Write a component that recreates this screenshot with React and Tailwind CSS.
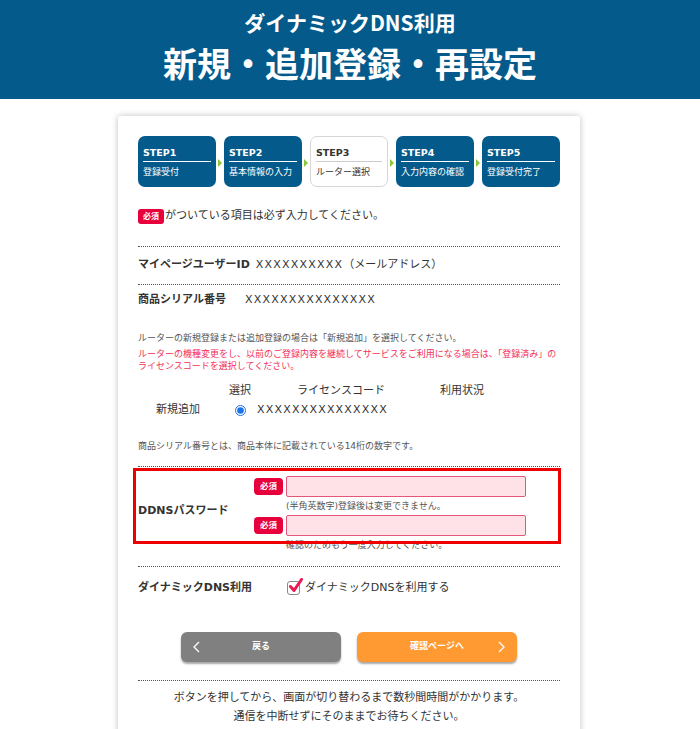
import React from "react";

function Step({ n, label, active }) {
  return (
    <div
      className={
        active
          ? "w-[78px] h-[51px] rounded-[7px] bg-white border border-[#d6d6d6] px-[5px] pt-[9px] text-[#333]"
          : "w-[78px] h-[51px] rounded-[7px] bg-[#045a8b] px-[5px] pt-[10px] text-white"
      }
    >
      <div
        className={
          active
            ? "text-[9.5px] font-bold leading-[14px] pb-[1px] border-b border-[#ccc]"
            : "text-[9.5px] font-bold leading-[14px] pb-[1px] border-b border-white"
        }
      >
        STEP{n}
      </div>
      <div className="text-[9px] leading-[12px] mt-[4px] whitespace-nowrap">{label}</div>
    </div>
  );
}

function Arrow() {
  return <div className="w-0 h-0 border-y-[4px] border-y-transparent border-l-[4px] border-l-[#8cc63f] mx-[2px] mt-[2px]" />;
}

function Badge({ big }) {
  return big ? (
    <span className="inline-flex items-center justify-center w-[29px] h-[17px] rounded-[4px] bg-[#e8003d] text-white text-[8.5px] font-bold leading-none">
      必須
    </span>
  ) : (
    <span className="inline-flex items-center justify-center w-[26px] h-[15px] rounded-[3px] bg-[#e8003d] text-white text-[8px] font-bold leading-none">
      必須
    </span>
  );
}

export default function App() {
  return (
    <div className="min-h-[729px] bg-white font-['DejaVu_Sans','Noto_Sans_CJK_JP',sans-serif] text-[#333]">
      <header className="h-[99px] bg-[#045a8b] flex flex-col items-center text-white font-bold">
        <div className="mt-[8px] text-[21px] leading-[28px] font-['Noto_Sans_CJK_JP',sans-serif]">ダイナミックDNS利用</div>
        <div className="mt-[6px] text-[34px] leading-[42px] font-['Noto_Sans_CJK_JP',sans-serif]">新規・追加登録・再設定</div>
      </header>

      <main className="mt-[17px] ml-[118px] w-[462px] bg-white rounded-[3px] shadow-[0_0_6px_rgba(0,0,0,0.25)] px-[20px] pt-[20px] pb-[20px]">
        <div className="flex items-center">
          <Step n={1} label="登録受付" />
          <Arrow />
          <Step n={2} label="基本情報の入力" />
          <Arrow />
          <Step n={3} label="ルーター選択" active />
          <Arrow />
          <Step n={4} label="入力内容の確認" />
          <Arrow />
          <Step n={5} label="登録受付完了" />
        </div>

        <div className="mt-[22px] flex items-center h-[15px] text-[11px]">
          <Badge />
          <span className="ml-[1px]">がついている項目は必ず入力してください。</span>
        </div>

        <div className="mt-[22px] border-t border-dotted border-[#555] h-[38px] flex items-center text-[11px]">
          <span className="font-bold pr-[6px] min-w-[107px]">マイページユーザーID</span>
          <span className="tracking-[1.2px]">XXXXXXXXXX</span>
          <span>（メールアドレス）</span>
        </div>
        <div className="border-t border-dotted border-[#555] h-[32px] flex items-center text-[11px]">
          <span className="font-bold pr-[6px] min-w-[107px]">商品シリアル番号</span>
          <span className="tracking-[1.2px]">XXXXXXXXXXXXXXX</span>
        </div>

        <div className="mt-[16px] text-[9px] leading-[12px]">
          <p className="text-[#555] mb-[4px]">ルーターの新規登録または追加登録の場合は「新規追加」を選択してください。</p>
          <p className="text-[#f4305a]">
            ルーターの機種変更をし、以前のご登録内容を継続してサービスをご利用になる場合は、「登録済み」のライセンスコードを選択してください。
          </p>
        </div>

        <div className="mt-[10px] text-[11px]">
          <div className="grid grid-cols-[80px_44px_158px_84px] h-[19px] items-center text-center">
            <span />
            <span>選択</span>
            <span>ライセンスコード</span>
            <span>利用状況</span>
          </div>
          <div className="grid grid-cols-[80px_44px_158px_84px] h-[19px] items-center">
            <span className="text-center">新規追加</span>
            <span className="flex justify-center">
              <input type="radio" checked readOnly className="w-[11px] h-[11px] m-0 accent-[#1a73e8]" />
            </span>
            <span className="-ml-[5px] tracking-[1.2px]">XXXXXXXXXXXXXXX</span>
            <span />
          </div>
        </div>

        <p className="mt-[20px] text-[9px] leading-[12px] text-[#555]">商品シリアル番号とは、商品本体に記載されている14桁の数字です。</p>

        <div className="mt-[14px] border-t border-dotted border-[#555] relative flex pb-[15px]">
          <div className="w-[116px] flex items-center pt-[4px] text-[11px] font-bold">DDNSパスワード</div>
          <div className="pt-[9px]">
            <div className="flex items-center gap-[3px]">
              <Badge big />
              <div className="w-[240px] h-[21px] rounded-[2px] border border-[#e4577b] bg-[#ffe2e8]" />
            </div>
            <p className="pl-[32px] mt-[3px] text-[9px] leading-[12px] text-[#555]">(半角英数字)登録後は変更できません。</p>
            <div className="flex items-center gap-[3px] mt-[3px]">
              <Badge big />
              <div className="w-[240px] h-[21px] rounded-[2px] border border-[#e4577b] bg-[#ffe2e8]" />
            </div>
            <p className="pl-[32px] mt-[3px] text-[9px] leading-[12px] text-[#555]">確認のためもう一度入力してください。</p>
          </div>
          <div className="absolute left-[-5px] top-[1px] w-[428px] h-[76px] border-[3px] border-[#ee0000] pointer-events-none" />
        </div>

        <div className="border-t border-dotted border-[#555] h-[43px] flex items-center text-[11px]">
          <span className="w-[149px] font-bold">ダイナミックDNS利用</span>
          <span className="relative w-[13px] h-[14px] rounded-[3px] border border-[#8a8a8a] bg-white">
            <svg className="absolute left-[0px] top-[-4px]" width="15" height="16" viewBox="0 0 15 16">
              <path d="M2.5 8.5 L6 12.5 L13.5 1.5" fill="none" stroke="#ea1a50" strokeWidth="3" strokeLinecap="round" strokeLinejoin="round" />
            </svg>
          </span>
          <span className="ml-[5px]">ダイナミックDNSを利用する</span>
        </div>

        <div className="mt-[23px] flex justify-center gap-[16px]">
          <button className="relative w-[160px] h-[30px] rounded-[6px] bg-[#808080] shadow-[0_2px_2px_rgba(0,0,0,0.35)] flex items-center justify-center text-white text-[9px] font-bold">
            <svg className="absolute left-[12px] top-[9px]" width="7" height="12" viewBox="0 0 7 12">
              <polyline points="6,1 1,6 6,11" fill="none" stroke="#fff" strokeWidth="1.3" />
            </svg>
            戻る
          </button>
          <button className="relative w-[160px] h-[30px] rounded-[6px] bg-[#ff9a33] shadow-[0_2px_2px_rgba(0,0,0,0.35)] flex items-center justify-center text-white text-[9px] font-bold">
            確認ページへ
            <svg className="absolute right-[12px] top-[9px]" width="7" height="12" viewBox="0 0 7 12">
              <polyline points="1,1 6,6 1,11" fill="none" stroke="#fff" strokeWidth="1.3" />
            </svg>
          </button>
        </div>

        <div className="mt-[18px] border-t border-dotted border-[#555] pt-[7px] text-center text-[11px] leading-[19px]">
          <p>ボタンを押してから、画面が切り替わるまで数秒間時間がかかります。</p>
          <p>通信を中断せずにそのままでお待ちください。</p>
        </div>
      </main>
    </div>
  );
}
